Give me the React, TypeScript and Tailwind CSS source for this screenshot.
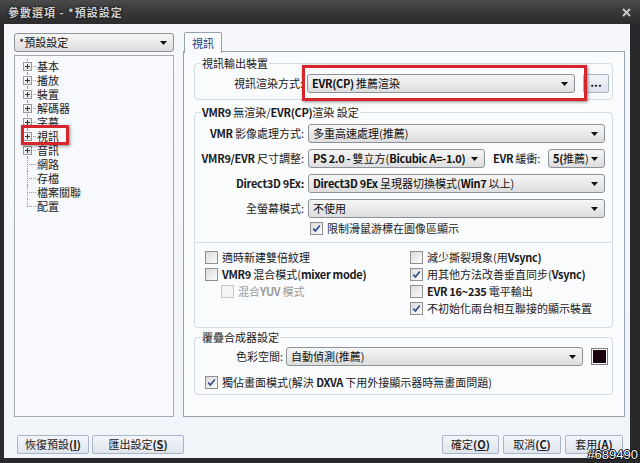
import type { ReactNode } from "react";

// ─── text helper: latin runs render heavier, like Segoe UI next to JhengHei ───

function T({ s }: { s: string }) {
  const parts = s.split(/([A-Za-z0-9][\x20-\x7e]*)/);
  return (
    <>
      {parts.map((p, i) =>
        i % 2 ? (
          <span key={i} className="font-semibold tracking-[-0.3px]">
            {p}
          </span>
        ) : (
          p
        )
      )}
    </>
  );
}

// ─── Combo ────────────────────────────────────────────────

function Combo({ value, className }: { value: string; className?: string }) {
  return (
    <div
      className={
        "flex items-center h-[19px] border border-[#8d9299] rounded-[3px] bg-gradient-to-b from-[#f6f6f6] to-[#dddddd] pl-[4px] pr-[6px] text-[11px] leading-[17px] text-[#111] shrink-0 " +
        (className ?? "")
      }
    >
      <span className="flex-1 overflow-hidden whitespace-nowrap">
        <T s={value} />
      </span>
      <svg width="7" height="4" viewBox="0 0 7 4" className="shrink-0 ml-[2px]">
        <path d="M0 0h7L3.5 4z" fill="#111" />
      </svg>
    </div>
  );
}

// ─── Checkbox ─────────────────────────────────────────────

function Check({
  label,
  checked = false,
  disabled = false,
}: {
  label: string;
  checked?: boolean;
  disabled?: boolean;
}) {
  return (
    <div className="flex items-center gap-[4px] h-[17px] whitespace-nowrap">
      <span
        className={
          "w-[13px] h-[13px] border flex items-center justify-center shrink-0 " +
          (disabled
            ? "border-[#c4c6c8] bg-[#f4f4f4]"
            : "border-[#8e8f8f] bg-gradient-to-br from-[#dcdcdc] to-[#fbfbfb]")
        }
      >
        {checked && (
          <svg width="9" height="9" viewBox="0 0 9 9">
            <path d="M1.2 4.6l2.2 2.4L7.8 1.4" fill="none" stroke="#2f4a8f" strokeWidth="1.6" />
          </svg>
        )}
      </span>
      <span className={disabled ? "text-[#9a9a9a]" : "text-[#1a1a1a]"}>
        <T s={label} />
      </span>
    </div>
  );
}

// ─── Group box ────────────────────────────────────────────

function Group({
  title,
  children,
  className,
}: {
  title: string;
  children: ReactNode;
  className?: string;
}) {
  return (
    <fieldset className={"border border-[#d4dbe3] rounded-[4px] " + (className ?? "")}>
      <legend className="ml-[6px] px-[1px] text-[11px] leading-[14px] text-[#1a1a1a]">
        <T s={title} />
      </legend>
      {children}
    </fieldset>
  );
}

// ─── Tree ─────────────────────────────────────────────────

const TREE = [
  { label: "基本", exp: true },
  { label: "播放", exp: true },
  { label: "裝置", exp: true },
  { label: "解碼器", exp: true },
  { label: "字幕", exp: true },
  { label: "視訊", exp: true },
  { label: "音訊", exp: true },
  { label: "網路", exp: false },
  { label: "存檔", exp: false },
  { label: "檔案關聯", exp: false },
  { label: "配置", exp: false },
];

function TreeRow({ label, exp, last }: { label: string; exp: boolean; last: boolean }) {
  return (
    <div className="flex items-center h-[14px]">
      <div className="relative w-[18px] h-[14px] shrink-0">
        <span
          className={
            "absolute left-[8px] top-0 border-l border-dotted border-[#9a9a9a] " +
            (last ? "h-[7px]" : "h-[14px]")
          }
        />
        <span className="absolute left-[8px] top-[7px] w-[9px] border-t border-dotted border-[#9a9a9a]" />
        {exp && (
          <span className="absolute left-[4px] top-[3px] w-[9px] h-[9px] border border-[#9a9a9a] bg-gradient-to-br from-white to-[#dedede] flex items-center justify-center">
            <svg width="5" height="5" viewBox="0 0 5 5">
              <path d="M0 2.5h5M2.5 0v5" stroke="#333" strokeWidth="1" />
            </svg>
          </span>
        )}
      </div>
      <span className="text-[11px] leading-[14px] text-[#222]">{label}</span>
    </div>
  );
}

// ─── Button ───────────────────────────────────────────────

function Btn({ label, k, className }: { label: string; k: string; className?: string }) {
  return (
    <button
      className={
        "h-[19px] border border-[#a7b5cb] rounded-[2px] bg-gradient-to-b from-[#f3f5f9] to-[#dfe4ec] text-[11px] leading-[17px] text-[#1a1a1a] flex items-center justify-center " +
        (className ?? "")
      }
    >
      {label}
      <span className="font-semibold">(</span>
      <span className="font-semibold underline">{k}</span>
      <span className="font-semibold">)</span>
    </button>
  );
}

// ─── App ──────────────────────────────────────────────────

export default function App() {
  return (
    <div className="relative w-[640px] h-[463px] overflow-hidden bg-[#29292b] flex flex-col font-['Noto_Sans_CJK_TC',sans-serif]">
      {/* title bar */}
      <div className="h-[24px] shrink-0 flex items-center pl-[8px] pr-[9px] bg-gradient-to-b from-[#4a4a4c] via-[#38383a] to-[#2c2c2e]">
        <span className="text-[11px] font-bold text-[#d0d0d0] tracking-[1px] [text-shadow:0_0_3px_#000]">
          參數選項 - *預設設定
        </span>
        <svg width="9" height="9" viewBox="0 0 9 9" className="ml-auto">
          <path d="M1 1l7 7M8 1L1 8" stroke="#c8c8c8" strokeWidth="2" />
        </svg>
      </div>

      {/* client area */}
      <div className="flex-1 ml-[4px] mr-[10px] mb-[5px] bg-gradient-to-b from-[#f6f8fc] to-[#f1f4f9] flex flex-col">
        <div className="flex pt-[8px] pl-[10px] gap-[9px]">
          {/* left column */}
          <div className="w-[160px] flex flex-col">
            <Combo value="*預設設定" className="mt-[1px]" />
            <div className="mt-[3px] h-[362px] border border-[#a4abb4] bg-[#f8f9fc] pt-[3px] pl-[4px]">
              {TREE.map((t, i) => (
                <TreeRow key={t.label} label={t.label} exp={t.exp} last={i === TREE.length - 1} />
              ))}
            </div>
          </div>

          {/* right column */}
          <div className="w-[442px] flex flex-col">
            <div className="relative z-10 ml-[1px] w-[38px] h-[21px] border border-b-0 border-[#97a1ad] rounded-t-[2px] bg-[#fafbfd] flex items-center justify-center text-[11px] text-[#23397a]">
              視訊
            </div>
            <div className="-mt-[2px] h-[366px] border border-[#97a1ad] bg-[#fafbfd] pt-[4px] pl-[10px] pr-[11px] text-[11px] text-[#1a1a1a]">
              {/* output device */}
              <Group title="視訊輸出裝置" className="pt-[4px] pb-[6px]">
                <div className="flex items-center">
                  <span className="w-[109px] text-right pr-[1px] whitespace-nowrap">視訊渲染方式:</span>
                  <Combo value="EVR(CP) 推薦渲染" className="ml-[3px] w-[268px]" />
                  <div className="ml-[8px] w-[26px] h-[19px] border border-[#a7b5cb] rounded-[2px] bg-gradient-to-b from-[#f3f5f9] to-[#dfe4ec] flex items-center justify-center text-[12px] font-semibold leading-none pb-[3px]">
                    ...
                  </div>
                </div>
              </Group>

              {/* VMR9 / EVR settings */}
              <Group
                title="VMR9 無渲染/EVR(CP)渲染 設定"
                className="mt-[5px] pt-[5px] pb-[5px] rounded-b-none"
              >
                <div className="flex flex-col gap-[6px]">
                  <div className="flex items-center">
                    <span className="w-[109px] text-right whitespace-nowrap">
                      <T s="VMR 影像處理方式:" />
                    </span>
                    <Combo value="多重高速處理(推薦)" className="ml-[4px] w-[297px]" />
                  </div>
                  <div className="flex items-center">
                    <span className="w-[109px] text-right whitespace-nowrap">
                      <T s="VMR9/EVR 尺寸調整:" />
                    </span>
                    <Combo value="PS 2.0 - 雙立方(Bicubic A=-1.0)" className="ml-[4px] w-[177px]" />
                    <span className="ml-[8px] w-[52px] whitespace-nowrap">
                      <T s="EVR 緩衝:" />
                    </span>
                    <Combo value="5(推薦)" className="ml-[3px] w-[57px]" />
                  </div>
                  <div className="flex items-center">
                    <span className="w-[109px] text-right whitespace-nowrap">
                      <T s="Direct3D 9Ex:" />
                    </span>
                    <Combo value="Direct3D 9Ex 呈現器切換模式(Win7 以上)" className="ml-[4px] w-[297px]" />
                  </div>
                  <div className="flex items-center">
                    <span className="w-[109px] text-right whitespace-nowrap">全螢幕模式:</span>
                    <Combo value="不使用" className="ml-[4px] w-[297px]" />
                  </div>
                </div>
                <div className="mt-[2px] ml-[115px]">
                  <Check label="限制滑鼠游標在圖像區顯示" checked />
                </div>
              </Group>

              {/* misc checkboxes */}
              <div className="border border-t-0 border-[#d4dbe3] rounded-b-[4px] pt-[6px] pb-[10px] pl-[10px] grid grid-cols-[205px_1fr]">
                <div className="flex flex-col">
                  <Check label="適時新建雙倍紋理" />
                  <Check label="VMR9 混合模式(mixer mode)" />
                  <div className="ml-[16px]">
                    <Check label="混合YUV 模式" disabled />
                  </div>
                </div>
                <div className="flex flex-col">
                  <Check label="減少撕裂現象(用Vsync)" />
                  <Check label="用其他方法改善垂直同步(Vsync)" checked />
                  <Check label="EVR 16~235 電平輸出" />
                  <Check label="不初始化兩台相互聯接的顯示裝置" checked />
                </div>
              </div>

              {/* overlay mixer */}
              <Group title="覆疊合成器設定" className="mt-[2px] pt-[3px] pb-[3px]">
                <div className="flex items-center">
                  <span className="w-[88px] text-right whitespace-nowrap">色彩空間:</span>
                  <Combo value="自動偵測(推薦)" className="ml-[3px] w-[297px]" />
                  <span className="ml-[8px] w-[17px] h-[17px] border border-[#7c7c7c] p-[1px] bg-white">
                    <span className="block w-full h-full bg-[#1a0010]" />
                  </span>
                </div>
                <div className="mt-[8px] ml-[10px]">
                  <Check label="獨佔畫面模式(解決 DXVA 下用外接顯示器時無畫面問題)" checked />
                </div>
              </Group>
            </div>
          </div>
        </div>

        {/* bottom buttons */}
        <div className="mt-[18px] flex items-center pl-[13px] pr-[7px] gap-[3px]">
          <Btn label="恢復預設" k="I" className="w-[72px]" />
          <Btn label="匯出設定" k="S" className="w-[92px]" />
          <Btn label="確定" k="O" className="w-[57px] ml-auto" />
          <Btn label="取消" k="C" className="w-[58px] ml-[1px]" />
          <Btn label="套用" k="A" className="w-[58px] ml-[1px]" />
        </div>
      </div>

      {/* red annotation frames */}
      <div className="absolute left-[21px] top-[125px] w-[48px] h-[20px] border-[3px] border-[#d6262b] shadow-[1px_1px_3px_rgba(0,0,0,0.45)]" />
      <div className="absolute left-[302px] top-[65px] w-[285px] h-[36px] border-[3px] border-[#d6262b] shadow-[1px_1px_3px_rgba(0,0,0,0.45)]" />

      {/* watermark */}
      <span className="absolute right-[2px] bottom-[1px] text-[13px] leading-[14px] text-white font-['Liberation_Sans',sans-serif] [text-shadow:1px_0_0_#000,-1px_0_0_#000,0_1px_0_#000,0_-1px_0_#000]">
        #689490
      </span>
    </div>
  );
}
